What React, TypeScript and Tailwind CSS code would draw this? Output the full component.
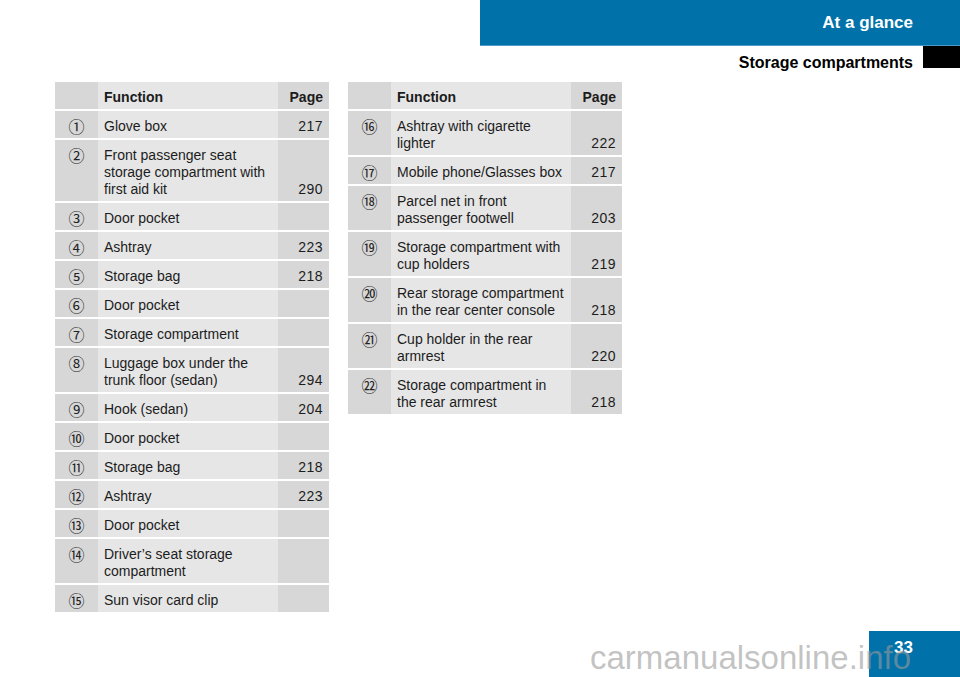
const left = [
  { n: "①", text: ["Glove box"], page: "217" },
  { n: "②", text: ["Front passenger seat", "storage compartment with", "first aid kit"], page: "290" },
  { n: "③", text: ["Door pocket"], page: "" },
  { n: "④", text: ["Ashtray"], page: "223" },
  { n: "⑤", text: ["Storage bag"], page: "218" },
  { n: "⑥", text: ["Door pocket"], page: "" },
  { n: "⑦", text: ["Storage compartment"], page: "" },
  { n: "⑧", text: ["Luggage box under the", "trunk floor (sedan)"], page: "294" },
  { n: "⑨", text: ["Hook (sedan)"], page: "204" },
  { n: "⑩", text: ["Door pocket"], page: "" },
  { n: "⑪", text: ["Storage bag"], page: "218" },
  { n: "⑫", text: ["Ashtray"], page: "223" },
  { n: "⑬", text: ["Door pocket"], page: "" },
  { n: "⑭", text: ["Driver’s seat storage", "compartment"], page: "" },
  { n: "⑮", text: ["Sun visor card clip"], page: "" },
];

const right = [
  { n: "⑯", text: ["Ashtray with cigarette", "lighter"], page: "222" },
  { n: "⑰", text: ["Mobile phone/Glasses box"], page: "217" },
  { n: "⑱", text: ["Parcel net in front", "passenger footwell"], page: "203" },
  { n: "⑲", text: ["Storage compartment with", "cup holders"], page: "219" },
  { n: "⑳", text: ["Rear storage compartment", "in the rear center console"], page: "218" },
  { n: "㉑", text: ["Cup holder in the rear", "armrest"], page: "220" },
  { n: "㉒", text: ["Storage compartment in", "the rear armrest"], page: "218" },
];

type Row = { n: string; text: string[]; page: string };

const Table = ({ rows }: { rows: Row[] }) => {
  return (
    <div className="flex flex-col gap-[2px] w-[274px] text-[14px] leading-[17px] text-[#1c1c1c]">
      <div className="flex">
        <div className="w-[43px] bg-[#d7d7d7]" />
        <div className="w-[180px] bg-[#e6e6e6] pt-[7px] pb-[3px] px-[6px] font-bold">Function</div>
        <div className="flex-1 bg-[#d7d7d7] pt-[7px] pb-[3px] pr-[6px] text-right font-bold">Page</div>
      </div>
      {rows.map((r) => (
        <div key={r.n} className="flex">
          <div className="w-[43px] bg-[#d7d7d7] pt-[6px] text-center text-[16px] leading-[18px] text-[#222] [font-family:'Noto_Sans_CJK_JP',sans-serif]">
            {r.n}
          </div>
          <div className="w-[180px] bg-[#e6e6e6] pt-[7px] pb-[3px] px-[6px]">
            {r.text.map((t) => (
              <div key={t}>{t}</div>
            ))}
          </div>
          <div className="flex-1 bg-[#d7d7d7] pt-[7px] pb-[3px] pr-[6px] flex items-end justify-end tracking-[0.5px]">
            {r.page}
          </div>
        </div>
      ))}
    </div>
  );
};

export default function App() {
  return (
    <div className="relative w-[960px] h-[677px] bg-white flex flex-col overflow-hidden [font-family:'Liberation_Sans',Arial,sans-serif]">
      <div className="flex">
        <div className="w-[480px]" />
        <div className="flex-1 h-[46px] bg-[#0071a9] border-b border-[#4a98c6] flex items-center justify-end pr-[47px] text-white font-bold text-[17px]">
          At a glance
        </div>
      </div>
      <div className="flex items-start justify-end h-[36px]">
        <div className="font-bold text-[16px] leading-[18px] text-black pr-[10px] pt-[8px]">Storage compartments</div>
        <div className="w-[37px] h-[22px] bg-black" />
      </div>
      <div className="flex items-start gap-[19px] pl-[55px]">
        <Table rows={left} />
        <Table rows={right} />
      </div>
      <div className="mt-auto flex justify-end">
        <div className="w-[91px] h-[46px] bg-[#0071a9] flex justify-end pr-[47px] pt-[6px] text-white font-bold text-[17px] leading-[22px]">
          33
        </div>
      </div>
      <div className="absolute left-[590px] top-[640px] text-[33px] leading-[36px] text-[#9a9a9a]/60">
        carmanualsonline.info
      </div>
    </div>
  );
}
